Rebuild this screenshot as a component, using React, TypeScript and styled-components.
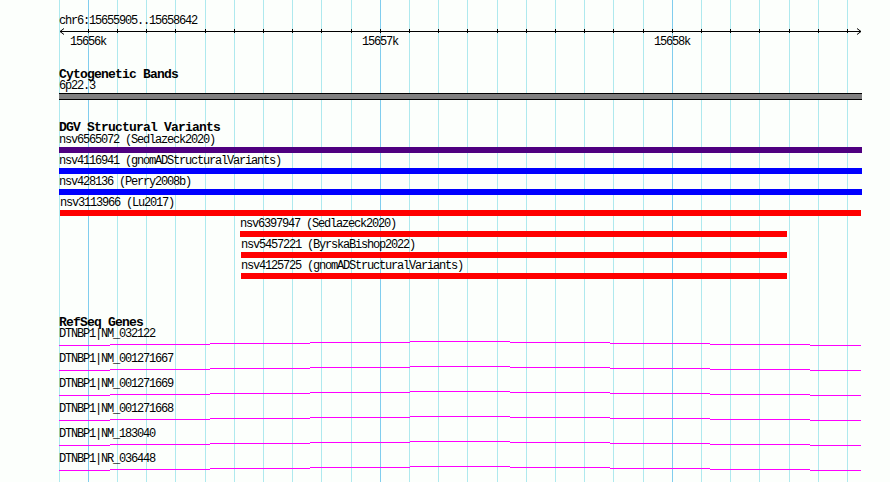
import React from 'react';
import styled, { createGlobalStyle } from 'styled-components';

// 基本の色と寸法
const BG = '#fcfffc';
const MINOR = '#aee9ee';
const MAJOR = '#80cdee';
const PANEL_LEFT = 59;
const PANEL_WIDTH = 803;

// グリッド線の位置 (ページ座標)
const gridXs = Array.from({ length: 28 }, (_, k) => Math.floor(59 + 29.2 * k));
const majorIdx = [1, 11, 21];

const gridImages = gridXs
  .map((_, k) => {
    const c = majorIdx.includes(k) ? MAJOR : MINOR;
    return `linear-gradient(${c}, ${c})`;
  })
  .join(', ');
const gridPositions = gridXs.map(x => `${x}px 0`).join(', ');

const GlobalStyle = createGlobalStyle`
  html, body {
    margin: 0;
    padding: 0;
    background: ${BG};
    overflow: hidden;
  }
`;

const Page = styled.div`
  min-height: 100vh;
  box-sizing: border-box;
  padding: 16px 0 0 ${PANEL_LEFT}px;
  background-color: ${BG};
  background-image: ${gridImages};
  background-position: ${gridPositions};
  background-size: 1px 100%;
  background-repeat: no-repeat;
  font-family: 'Liberation Mono', 'DejaVu Sans Mono', monospace;
  color: #000;
`;

const Panel = styled.div`
  width: ${PANEL_WIDTH}px;
  display: flex;
  flex-direction: column;
`;

const Label = styled.div`
  font-size: 12px;
  line-height: 11px;
  height: 11px;
  letter-spacing: -1.2px;
  white-space: nowrap;
`;

const TrackTitle = styled.div`
  font-size: 13px;
  font-weight: bold;
  line-height: 12px;
  height: 12px;
  letter-spacing: -0.8px;
  white-space: nowrap;
`;

const Track = styled.section<{ $top: number }>`
  margin-top: ${p => p.$top}px;
  display: flex;
  flex-direction: column;
`;

const RulerSvg = styled.svg`
  display: block;
  overflow: visible;
  font-family: 'Liberation Mono', 'DejaVu Sans Mono', monospace;
  font-size: 12px;
  letter-spacing: -1.2px;
  shape-rendering: crispEdges;
`;

const BandBar = styled.div`
  margin-top: 1px;
  height: 5px;
  background: #808080;
  border-top: 1px solid #000;
  border-bottom: 1px solid #000;
`;

const FeatureList = styled.div`
  margin-top: 1px;
  display: flex;
  flex-direction: column;
`;

const FeatureRow = styled.div`
  height: 21px;
  display: flex;
  flex-direction: column;
`;

const FeatureBar = styled.div<{ $color: string }>`
  margin-top: 1px;
  height: 6px;
  background: ${p => p.$color};
`;

const GeneRow = styled.div`
  height: 25px;
  display: flex;
  flex-direction: column;
`;

const GeneSvg = styled.svg`
  display: block;
  shape-rendering: crispEdges;
`;

// データ
const ticks = gridXs.slice(1).map((x, i) => ({ x: x - PANEL_LEFT + 0.5, id: i + 1 }));
const tickLabels = [
  { x: 88, text: '15656k' },
  { x: 380, text: '15657k' },
  { x: 672, text: '15658k' },
];

type Feature = { name: string; source: string; start: number; end: number; color: string };

const variants: Feature[] = [
  { name: 'nsv6565072', source: 'Sedlazeck2020', start: 59, end: 862, color: '#4f0080' },
  { name: 'nsv4116941', source: 'gnomADStructuralVariants', start: 59, end: 862, color: '#0000ff' },
  { name: 'nsv428136', source: 'Perry2008b', start: 59, end: 862, color: '#0000ff' },
  { name: 'nsv3113966', source: 'Lu2017', start: 60, end: 861, color: '#ff0000' },
  { name: 'nsv6397947', source: 'Sedlazeck2020', start: 240, end: 787, color: '#ff0000' },
  { name: 'nsv5457221', source: 'ByrskaBishop2022', start: 241, end: 787, color: '#ff0000' },
  { name: 'nsv4125725', source: 'gnomADStructuralVariants', start: 241, end: 787, color: '#ff0000' },
];

const genes = [
  'DTNBP1|NM_032122',
  'DTNBP1|NM_001271667',
  'DTNBP1|NM_001271669',
  'DTNBP1|NM_001271668',
  'DTNBP1|NM_183040',
  'DTNBP1|NR_036448',
];

// 遺伝子ラインの段差 (ページx座標, yオフセット)
const geneSteps = [59, 110, 210, 310, 410, 510, 610, 710, 810, 861];
const geneYs = [5.5, 4.5, 3.5, 2.5, 1.5, 2.5, 3.5, 4.5, 5.5];
const genePath = geneYs
  .map((y, i) => `M${geneSteps[i] - PANEL_LEFT} ${y}H${geneSteps[i + 1] - PANEL_LEFT}`)
  .join('');

const Ruler: React.FC = () => (
  <RulerSvg width={PANEL_WIDTH} height={23}>
    <line x1={1} y1={4.5} x2={802} y2={4.5} stroke="#000" />
    <polyline points="5,1.5 1,4.5 5,7.5" fill="none" stroke="#000" shapeRendering="auto" />
    <polyline points="798,1.5 802,4.5 798,7.5" fill="none" stroke="#000" shapeRendering="auto" />
    {ticks.map(t => (
      <line key={t.id} x1={t.x} y1={2} x2={t.x} y2={6} stroke="#000" />
    ))}
    {tickLabels.map(t => (
      <text key={t.text} x={t.x - PANEL_LEFT} y={18} textAnchor="middle" fill="#000">
        {t.text}
      </text>
    ))}
  </RulerSvg>
);

const App: React.FC = () => (
  <>
    <GlobalStyle />
    <Page>
      <Panel>
        <Label>chr6:15655905..15658642</Label>
        <Ruler />

        <Track $top={19}>
          <TrackTitle>Cytogenetic Bands</TrackTitle>
          <Label>6p22.3</Label>
          <BandBar />
        </Track>

        <Track $top={22}>
          <TrackTitle>DGV Structural Variants</TrackTitle>
          <FeatureList>
            {variants.map(v => (
              <FeatureRow key={v.name} style={{ marginLeft: v.start - PANEL_LEFT }}>
                <Label>
                  {v.name} ({v.source})
                </Label>
                <FeatureBar $color={v.color} style={{ width: v.end - v.start }} />
              </FeatureRow>
            ))}
          </FeatureList>
        </Track>

        <Track $top={35}>
          <TrackTitle>RefSeq Genes</TrackTitle>
          {genes.map(g => (
            <GeneRow key={g}>
              <Label>{g}</Label>
              <GeneSvg width={PANEL_WIDTH} height={14}>
                <path d={genePath} stroke="#ff00ff" fill="none" />
              </GeneSvg>
            </GeneRow>
          ))}
        </Track>
      </Panel>
    </Page>
  </>
);

export default App;
